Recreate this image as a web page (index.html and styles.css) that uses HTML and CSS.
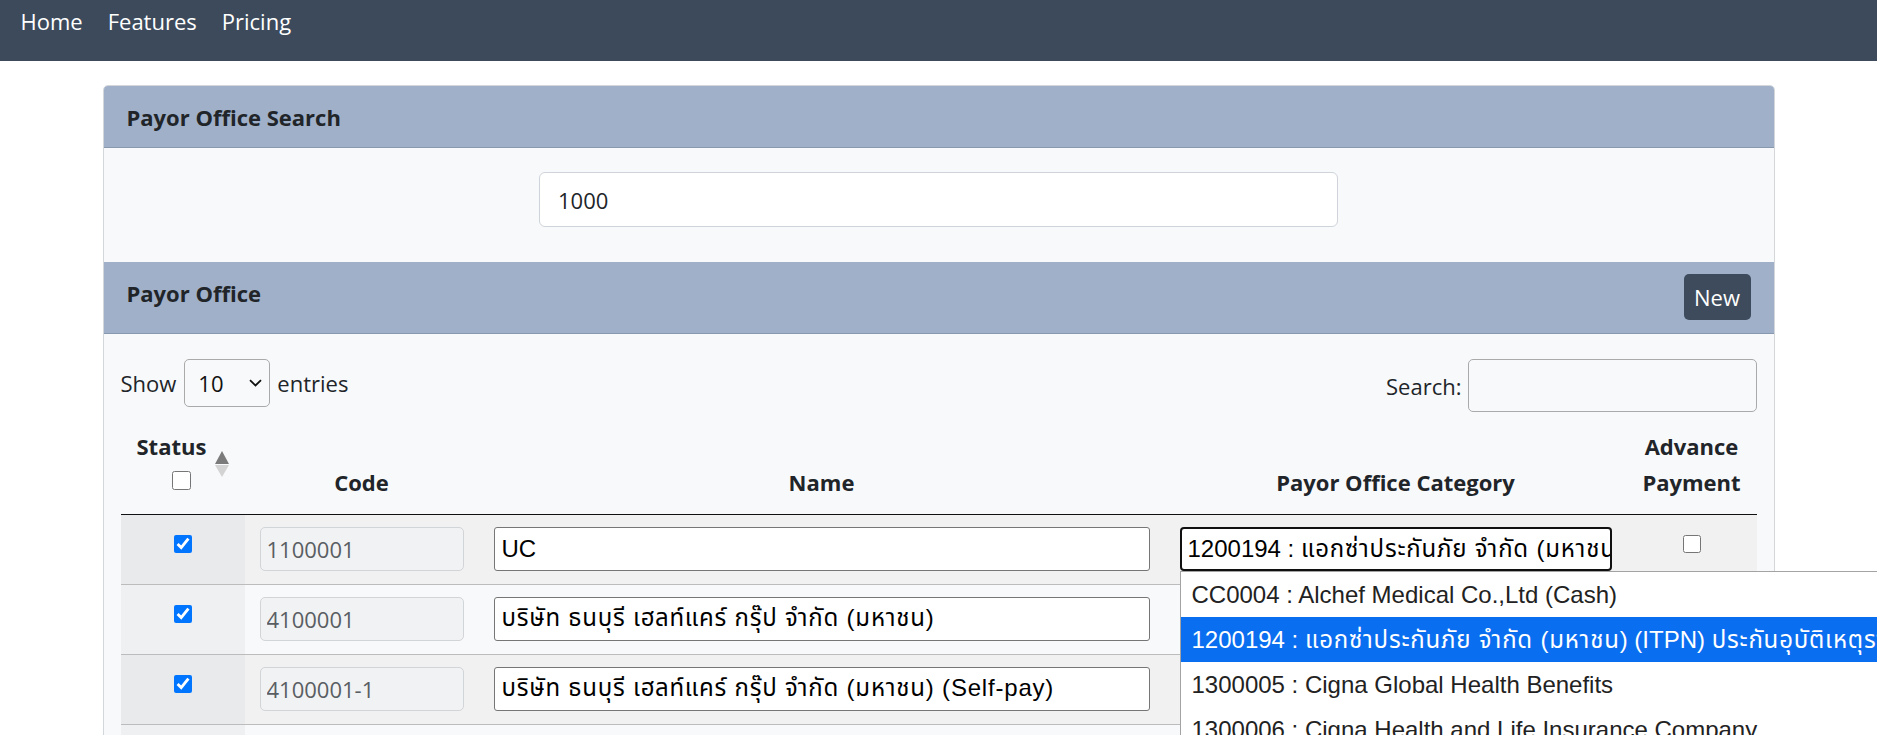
FILE: index.html
```html
<!DOCTYPE html>
<html lang="th">
<head>
<meta charset="utf-8">
<title>Payor Office</title>
<link rel="stylesheet" href="styles.css">
</head>
<body>
<nav class="navbar">
  <a class="nav-link" href="#">Home</a>
  <a class="nav-link" href="#">Features</a>
  <a class="nav-link" href="#">Pricing</a>
</nav>
<main class="container">
  <section class="card">
    <div class="card-header first">Payor Office Search</div>
    <div class="search-body">
      <input class="search-main" type="text" value="1000">
    </div>
    <div class="card-header header-row">
      <span class="header-title">Payor Office</span>
      <button class="btn-new" type="button">New</button>
    </div>
    <div class="table-body">
      <div class="dt-controls">
        <div class="dt-length">
          <span>Show</span>
          <div class="select-box">
            <span>10</span>
            <svg class="chev" width="13" height="8" viewBox="0 0 13 8"><path d="M1 1.2 L6.5 6.5 L12 1.2" fill="none" stroke="#111" stroke-width="1.8"/></svg>
          </div>
          <span>entries</span>
        </div>
        <div class="dt-filter">
          <span>Search:</span>
          <input class="dt-search" type="text">
        </div>
      </div>
      <table class="dt-table">
        <colgroup>
          <col class="c-status"><col class="c-code"><col class="c-name"><col class="c-cat"><col class="c-adv">
        </colgroup>
        <thead>
          <tr>
            <th class="th-status">
              <div>Status</div>
              <input class="cb cb-head" type="checkbox">
              <svg class="sort-icon" width="16" height="26" viewBox="0 0 16 26"><polygon points="1,13 8,0 15,13" fill="#7b7b7b"/><polygon points="1,14 8,26 15,14" fill="#d3d3d3"/></svg>
            </th>
            <th>Code</th>
            <th>Name</th>
            <th>Payor Office Category</th>
            <th>Advance<br>Payment</th>
          </tr>
        </thead>
        <tbody>
          <tr class="odd">
            <td class="status"><input class="cb" type="checkbox" checked></td>
            <td><input class="code-input" type="text" value="1100001" disabled></td>
            <td><input class="name-input" type="text" value="UC"></td>
            <td>
              <div class="cat-open">
                <div class="cat-select focused">1200194 : <span class="thai">แอกซ่าประกันภัย จำกัด (มหาชน</span>) (ITPN) <span class="thai">ประกันอุบัติเหตุรายบุคคล</span></div>
                <div class="dropdown">
                  <div class="dd-item">CC0004 : Alchef Medical Co.,Ltd (Cash)</div>
                  <div class="dd-item active">1200194 : <span class="thai">แอกซ่าประกันภัย จำกัด (มหาชน</span>) (ITPN) <span class="thai">ประกันอุบัติเหตุรายบุคคล</span></div>
                  <div class="dd-item">1300005 : Cigna Global Health Benefits</div>
                  <div class="dd-item">1300006 : Cigna Health and Life Insurance Company</div>
                  <div class="dd-item">1300007 : Cigna Insurance Public Company Limited</div>
                </div>
              </div>
            </td>
            <td class="adv"><input class="cb" type="checkbox"></td>
          </tr>
          <tr class="even">
            <td class="status"><input class="cb" type="checkbox" checked></td>
            <td><input class="code-input" type="text" value="4100001" disabled></td>
            <td><input class="name-input thai" type="text" value="บริษัท ธนบุรี เฮลท์แคร์ กรุ๊ป จำกัด (มหาชน)"></td>
            <td><div class="cat-select">CC0004 : Alchef Medical Co.,Ltd (Cash)</div></td>
            <td class="adv"><input class="cb" type="checkbox"></td>
          </tr>
          <tr class="odd">
            <td class="status"><input class="cb" type="checkbox" checked></td>
            <td><input class="code-input" type="text" value="4100001-1" disabled></td>
            <td><input class="name-input thai" type="text" value="บริษัท ธนบุรี เฮลท์แคร์ กรุ๊ป จำกัด (มหาชน) (Self-pay)"></td>
            <td><div class="cat-select">CC0004 : Alchef Medical Co.,Ltd (Cash)</div></td>
            <td class="adv"><input class="cb" type="checkbox"></td>
          </tr>
          <tr class="even">
            <td class="status"><input class="cb" type="checkbox" checked></td>
            <td><input class="code-input" type="text" value="4100002" disabled></td>
            <td><input class="name-input thai" type="text" value="บริษัท ธนบุรี เฮลท์แคร์ กรุ๊ป จำกัด (มหาชน)"></td>
            <td><div class="cat-select">CC0004 : Alchef Medical Co.,Ltd (Cash)</div></td>
            <td class="adv"><input class="cb" type="checkbox"></td>
          </tr>
        </tbody>
      </table>
    </div>
  </section>
</main>
</body>
</html>
```
FILE: styles.css
```css
html, body {
  margin: 0;
  padding: 0;
  overflow: hidden;
  background: #ffffff;
}
body {
  font-family: "Open Sans", "Noto Sans", "Liberation Sans", sans-serif;
  font-size: 22px;
  line-height: 36px;
  color: #212529;
}

.navbar {
  box-sizing: border-box;
  height: 61px;
  background: #3c4a5c;
  padding: 3px 8px 0;
  display: flex;
  align-items: flex-start;
}
.nav-link {
  color: #ffffff;
  text-decoration: none;
  padding: 0 12.5px;
  line-height: 36px;
}

.container {
  width: 1672px;
  margin: 24px auto 0;
}
.card {
  border: 1px solid #d3d7dc;
  border-radius: 5px;
  background: #f8f9fa;
}
.card-header {
  background: #9fb0c8;
  border-bottom: 1px solid #8898ae;
  padding: 13px 23px 12px;
  font-weight: 700;
}
.card-header.first {
  border-radius: 4px 4px 0 0;
}
.search-body {
  display: flex;
  justify-content: center;
  padding: 24px 0 35px;
}
.search-main {
  box-sizing: border-box;
  width: 799px;
  height: 55px;
  border: 1px solid #ced4da;
  border-radius: 6px;
  background: #ffffff;
  padding: 0 18px;
  font-family: "Open Sans", sans-serif;
  font-size: 22px;
  color: #212529;
  margin: 0;
}
.header-row {
  display: flex;
  justify-content: space-between;
  align-items: flex-start;
  padding: 12px 23px 13px;
}
.header-title {
  padding-top: 1px;
}
.btn-new {
  width: 67px;
  height: 46px;
  border: none;
  border-radius: 5px;
  background: #3d4b5c;
  color: #ffffff;
  font-family: "Open Sans", sans-serif;
  font-size: 22px;
  line-height: 46px;
  padding: 0;
}

.table-body {
  padding: 25px 17px 0;
}
.dt-controls {
  display: flex;
  justify-content: space-between;
  align-items: flex-start;
  height: 53px;
}
.dt-length {
  display: flex;
  align-items: center;
  height: 48px;
}
.select-box {
  box-sizing: border-box;
  width: 86px;
  height: 48px;
  margin: 0 7px 0 8px;
  border: 1px solid #aaaaaa;
  border-radius: 5px;
  display: flex;
  align-items: center;
  justify-content: space-between;
  padding: 0 7px 0 13px;
  color: #111;
}
.chev {
  display: block;
}
.dt-filter {
  display: flex;
  align-items: center;
  height: 53px;
  gap: 6px;
}
.dt-search {
  box-sizing: border-box;
  width: 289px;
  height: 53px;
  border: 1px solid #aaaaaa;
  border-radius: 5px;
  background: transparent;
  margin: 0;
}

.dt-table {
  width: 100%;
  table-layout: fixed;
  border-collapse: collapse;
  margin-top: 3px;
}
.c-status { width: 124px; }
.c-code { width: 234px; }
.c-name { width: 686px; }
.c-cat { width: 462px; }
.c-adv { width: 130px; }

.dt-table th {
  font-weight: 700;
  padding: 13px 15px 14px;
  vertical-align: bottom;
  text-align: center;
  border-bottom: 1px solid #111111;
  line-height: 36px;
}
.dt-table th.th-status {
  text-align: left;
  padding-left: 16px;
  position: relative;
}
.cb {
  display: block;
  width: 18px;
  height: 18px;
  margin: 0 auto;
}
.cb-head {
  width: 19px;
  height: 19px;
  margin: 7px 0 10px 35px;
}
.sort-icon {
  position: absolute;
  left: 93px;
  top: 36px;
}

.dt-table td {
  padding: 12px 15px 13px;
  vertical-align: top;
  border-bottom: 1px solid #bcbcbc;
}
.dt-table td.status,
.dt-table td.adv {
  padding-top: 20px;
}
tr.odd td { background: #f1f1f2; }
tr.odd td.status { background: #e9eaeb; }
tr.even td { background: #f8f9fa; }
tr.even td.status { background: #eff0f1; }

.code-input {
  box-sizing: border-box;
  display: block;
  width: 100%;
  height: 44px;
  margin: 0;
  border: 1px solid #d2d5d8;
  border-radius: 5px;
  background: #f1f2f3;
  padding: 0 6px;
  font-family: "Open Sans", sans-serif;
  font-size: 22px;
  color: #595e63;
}
.name-input {
  box-sizing: border-box;
  display: block;
  width: 100%;
  height: 44px;
  margin: 0;
  border: 1px solid #767676;
  border-radius: 3px;
  background: #ffffff;
  padding: 0 7px;
  font-family: "Liberation Sans", "Noto Sans Thai", "Loma", sans-serif;
  font-size: 24px;
  color: #000000;
}
.thai {
  letter-spacing: 0.8px;
}
.cat-open {
  position: relative;
  z-index: 5;
}
.cat-select {
  box-sizing: border-box;
  height: 44px;
  border: 1px solid #767676;
  border-radius: 3px;
  background: #ffffff;
  padding: 0 7px;
  font-family: "Liberation Sans", "Noto Sans Thai", "Loma", sans-serif;
  font-size: 24px;
  line-height: 42px;
  color: #000000;
  white-space: nowrap;
  overflow: hidden;
}
.cat-select.focused {
  border: 2px solid #101010;
  border-radius: 4px;
  padding: 0 6px;
  line-height: 40px;
}
.dropdown {
  position: absolute;
  left: 0;
  top: 44px;
  width: 1000px;
  background: #ffffff;
  border: 1px solid #a3a3a3;
  font-family: "Liberation Sans", "Noto Sans Thai", "Loma", sans-serif;
  font-size: 24px;
  color: #222222;
}
.dd-item {
  height: 45px;
  line-height: 45px;
  padding: 0 11px;
  white-space: nowrap;
}
.dd-item.active {
  background: #0a6ef0;
  color: #ffffff;
}
```
